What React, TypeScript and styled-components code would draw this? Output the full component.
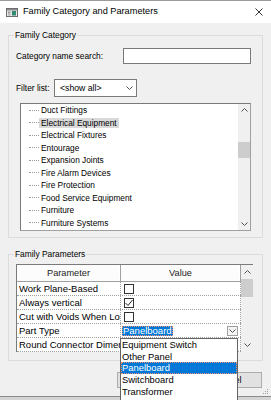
import React from 'react';
import styled, { createGlobalStyle } from 'styled-components';

const Global = createGlobalStyle`
  html, body { margin: 0; padding: 0; background: #f0f0f0; }
  body { font-family: "Liberation Sans", Arial, sans-serif; }
  * { box-sizing: border-box; }
`;

const Window = styled.div`
  width: 271px;
  height: 400px;
  overflow: hidden;
  position: relative;
  display: flex;
  flex-direction: column;
  background: #f0f0f0;
  color: #000;
  font-family: "Liberation Sans", Arial, sans-serif;
`;

const TitleBar = styled.div`
  height: 23px;
  flex: none;
  background: #fff;
  border-top: 1px solid #9a9a9a;
  display: flex;
  align-items: center;
  padding: 0 8px 0 6px;
`;

const Title = styled.span`
  flex: 1;
  margin-left: 5px;
  font-size: 9.2px;
  line-height: 1;
`;

const Body = styled.div`
  flex: 1;
  display: flex;
  flex-direction: column;
  padding: 0 8px;
`;

const Group = styled.fieldset<{ $top: number; $pt: number; $pb: number; $pr: number }>`
  margin: ${p => p.$top}px 0 0;
  padding: ${p => p.$pt}px ${p => p.$pr}px ${p => p.$pb}px 7px;
  border: 1px solid #dcdcdc;
  min-width: 0;
  display: flex;
  flex-direction: column;
`;

const Legend = styled.legend`
  font-size: 8.4px;
  line-height: 10px;
  padding: 0 1px;
  margin-left: -2px;
`;

const FormRow = styled.div<{ $mt?: number; $h: number }>`
  display: flex;
  align-items: center;
  height: ${p => p.$h}px;
  margin-top: ${p => p.$mt ?? 0}px;
`;

const Label = styled.span<{ $w?: number }>`
  font-size: 8.4px;
  white-space: nowrap;
  ${p => (p.$w ? `width: ${p.$w}px;` : '')}
`;

const TextInput = styled.div`
  margin-left: auto;
  width: 128px;
  height: 16px;
  background: #fff;
  border: 1px solid #7a7a7a;
`;

const SelectBox = styled.div`
  width: 83px;
  height: 18px;
  background: #fff;
  border: 1px solid #7a7a7a;
  display: flex;
  align-items: center;
  padding: 0 3px 0 5px;
  font-size: 8.7px;
  justify-content: space-between;
`;

const Tree = styled.div`
  margin: 6px 0 0 4px;
  width: 231px;
  height: 128px;
  background: #fff;
  border: 1px solid #a0a0a0;
  border-top-color: #7a7a7a;
  border-left-color: #7a7a7a;
  display: flex;
`;

const TreeItems = styled.div`
  flex: 1;
  display: flex;
  flex-direction: column;
`;

const TreeRow = styled.div`
  height: 12.5px;
  display: flex;
  align-items: center;
  padding-left: 8px;
`;

const Dash = styled.span`
  width: 10px;
  height: 0;
  border-top: 1px dotted #9a9a9a;
`;

const TreeLabel = styled.span<{ $sel?: boolean }>`
  font-size: 8.3px;
  line-height: 10px;
  padding: 0 2px;
  white-space: nowrap;
  background: ${p => (p.$sel ? '#d9d9d9' : 'transparent')};
`;

const ScrollBar = styled.div<{ $w: number }>`
  width: ${p => p.$w}px;
  flex: none;
  background: #f0f0f0;
  display: flex;
  flex-direction: column;
`;

const ArrowBox = styled.div<{ $h: number }>`
  height: ${p => p.$h}px;
  flex: none;
  display: flex;
  align-items: center;
  justify-content: center;
`;

const Track = styled.div`
  flex: 1;
  display: flex;
  flex-direction: column;
`;

const Thumb = styled.div<{ $mt: number; $h: number }>`
  margin-top: ${p => p.$mt}px;
  height: ${p => p.$h}px;
  background: #cdcdcd;
`;

const Table = styled.div`
  display: flex;
  width: 237px;
  height: 88px;
  background: #fff;
  border-top: 1px solid #7a7a7a;
  border-left: 1px solid #7a7a7a;
`;

const Grid = styled.div`
  width: 224px;
  flex: none;
  display: flex;
  flex-direction: column;
`;

const HeaderRow = styled.div`
  display: flex;
  height: 17px;
  border-bottom: 1px solid #a0a0a0;
  background: #fcfcfc;
`;

const HeaderCell = styled.div<{ $w?: number }>`
  ${p => (p.$w ? `width: ${p.$w}px; flex: none;` : 'flex: 1;')}
  display: flex;
  align-items: center;
  justify-content: center;
  font-size: 9.2px;
  border-right: 1px solid #a0a0a0;
  box-shadow: inset -1px 0 0 #fff;
  color: #1a1a1a;
`;

const Row = styled.div`
  display: flex;
  height: 14px;
  border-bottom: 1px dotted #a0a0a0;
`;

const ParamCell = styled.div`
  width: 104px;
  flex: none;
  border-right: 1px dotted #a0a0a0;
  font-size: 9.5px;
  line-height: 13px;
  padding-left: 2px;
  white-space: nowrap;
  overflow: hidden;
`;

const ValueCell = styled.div`
  flex: 1;
  position: relative;
  border-right: 1px dotted #a0a0a0;
  display: flex;
  align-items: center;
  padding-left: 3px;
`;

const CheckBox = styled.div`
  width: 10px;
  height: 10px;
  border: 1px solid #333;
  background: #fff;
  display: flex;
  align-items: center;
  justify-content: center;
`;

const Chosen = styled.span`
  margin-left: -2px;
  background: #0078d7;
  color: #fff;
  font-size: 9.5px;
  line-height: 10px;
  padding: 0 1px;
  outline: 1px dotted #f09070;
  outline-offset: -1px;
`;

const DropBtn = styled.div`
  margin-left: auto;
  margin-right: 2px;
  width: 11px;
  height: 10px;
  border: 1px solid #a0a0a0;
  background: #f4f4f4;
  display: flex;
  align-items: center;
  justify-content: center;
`;

const Popup = styled.div`
  position: absolute;
  left: -1px;
  top: 14px;
  width: 118px;
  height: 70px;
  background: #fff;
  border: 1px solid #646464;
  z-index: 10;
  display: flex;
  flex-direction: column;
`;

const PopupItem = styled.div<{ $sel?: boolean }>`
  height: 11.7px;
  flex: none;
  font-size: 9.4px;
  line-height: 11.7px;
  padding-left: 1px;
  white-space: nowrap;
  background: ${p => (p.$sel ? '#0078d7' : '#fff')};
  color: ${p => (p.$sel ? '#fff' : '#000')};
  outline: ${p => (p.$sel ? '1px dotted #f09070' : 'none')};
  outline-offset: -1px;
`;

const ButtonRow = styled.div`
  display: flex;
  justify-content: flex-end;
  gap: 7px;
  margin-top: 11px;
  padding-right: 1px;
`;

const Button = styled.div`
  width: 69px;
  height: 16px;
  background: #e1e1e1;
  border: 1px solid #adadad;
  font-size: 9px;
  display: flex;
  align-items: center;
  justify-content: center;
`;

const Footer = styled.div`
  margin-top: auto;
  height: 4px;
  flex: none;
  border-top: 1px solid #8a8a8a;
  background: #d4d4d4;
`;

const Grip = styled.svg`
  position: absolute;
  right: 2px;
  bottom: 5px;
`;

const Chevron = ({ up }: { up?: boolean }) => (
  <svg width="7" height="4" viewBox="0 0 7 4">
    <polyline
      points={up ? '0.5,3.5 3.5,0.5 6.5,3.5' : '0.5,0.5 3.5,3.5 6.5,0.5'}
      fill="none"
      stroke="#505050"
      strokeWidth="1"
    />
  </svg>
);

const treeItems = [
  'Duct Fittings',
  'Electrical Equipment',
  'Electrical Fixtures',
  'Entourage',
  'Expansion Joints',
  'Fire Alarm Devices',
  'Fire Protection',
  'Food Service Equipment',
  'Furniture',
  'Furniture Systems',
];

const partTypes = ['Equipment Switch', 'Other Panel', 'Panelboard', 'Switchboard', 'Transformer'];

export default function App() {
  return (
    <Window>
      <Global />
      <TitleBar>
        <svg width="12" height="9" viewBox="0 0 12 9">
          <rect x="0.5" y="0.5" width="11" height="8" fill="#e8e8e8" stroke="#6e6e6e" />
          <rect x="1" y="1" width="10" height="1.5" fill="#8a8a8a" />
          <rect x="2" y="3.5" width="2.5" height="2" fill="#9a9a9a" />
          <rect x="2" y="6" width="2.5" height="1.5" fill="#b5b5b5" />
          <rect x="6" y="3" width="4" height="4.5" fill="#2e8b72" />
        </svg>
        <Title>Family Category and Parameters</Title>
        <svg width="8" height="8" viewBox="0 0 8 8">
          <path d="M0.5 0.5 L7.5 7.5 M7.5 0.5 L0.5 7.5" stroke="#333" strokeWidth="1" fill="none" />
        </svg>
      </TitleBar>
      <Body>
        <Group $top={7} $pt={8} $pb={6} $pr={11}>
          <Legend>Family Category</Legend>
          <FormRow $h={16}>
            <Label>Category name search:</Label>
            <TextInput />
          </FormRow>
          <FormRow $h={18} $mt={15}>
            <Label $w={38}>Filter list:</Label>
            <SelectBox>
              <span>&lt;show all&gt;</span>
              <Chevron />
            </SelectBox>
          </FormRow>
          <Tree>
            <TreeItems>
              {treeItems.map(t => (
                <TreeRow key={t}>
                  <Dash />
                  <TreeLabel $sel={t === 'Electrical Equipment'}>{t}</TreeLabel>
                </TreeRow>
              ))}
            </TreeItems>
            <ScrollBar $w={12}>
              <ArrowBox $h={12}>
                <Chevron up />
              </ArrowBox>
              <Track>
                <Thumb $mt={26} $h={16} />
              </Track>
              <ArrowBox $h={12}>
                <Chevron />
              </ArrowBox>
            </ScrollBar>
          </Tree>
        </Group>

        <Group $top={11} $pt={5} $pb={8} $pr={9}>
          <Legend>Family Parameters</Legend>
          <Table>
            <Grid>
              <HeaderRow>
                <HeaderCell $w={104}>Parameter</HeaderCell>
                <HeaderCell>Value</HeaderCell>
              </HeaderRow>
              <Row>
                <ParamCell>Work Plane-Based</ParamCell>
                <ValueCell>
                  <CheckBox />
                </ValueCell>
              </Row>
              <Row>
                <ParamCell>Always vertical</ParamCell>
                <ValueCell>
                  <CheckBox>
                    <svg width="8" height="8" viewBox="0 0 8 8">
                      <polyline points="0.5,4 3,6.5 7.5,1" fill="none" stroke="#222" strokeWidth="1" />
                    </svg>
                  </CheckBox>
                </ValueCell>
              </Row>
              <Row>
                <ParamCell>Cut with Voids When Loaded</ParamCell>
                <ValueCell>
                  <CheckBox />
                </ValueCell>
              </Row>
              <Row>
                <ParamCell>Part Type</ParamCell>
                <ValueCell>
                  <Chosen>Panelboard</Chosen>
                  <DropBtn>
                    <Chevron />
                  </DropBtn>
                  <Popup>
                    {partTypes.map(p => (
                      <PopupItem key={p} $sel={p === 'Panelboard'}>
                        {p}
                      </PopupItem>
                    ))}
                  </Popup>
                </ValueCell>
              </Row>
              <Row>
                <ParamCell>Round Connector Dimension</ParamCell>
                <ValueCell />
              </Row>
            </Grid>
            <ScrollBar $w={12}>
              <ArrowBox $h={14}>
                <Chevron up />
              </ArrowBox>
              <Track>
                <Thumb $mt={0} $h={18} />
              </Track>
              <ArrowBox $h={14}>
                <Chevron />
              </ArrowBox>
            </ScrollBar>
          </Table>
        </Group>

        <ButtonRow>
          <Button>OK</Button>
          <Button>Cancel</Button>
        </ButtonRow>
      </Body>
      <Footer />
      <Grip width="7" height="7" viewBox="0 0 7 7">
        <rect x="5" y="1" width="1" height="1" fill="#a0a0a0" />
        <rect x="3" y="3" width="1" height="1" fill="#a0a0a0" />
        <rect x="5" y="3" width="1" height="1" fill="#a0a0a0" />
        <rect x="1" y="5" width="1" height="1" fill="#a0a0a0" />
        <rect x="3" y="5" width="1" height="1" fill="#a0a0a0" />
        <rect x="5" y="5" width="1" height="1" fill="#a0a0a0" />
      </Grip>
    </Window>
  );
}
